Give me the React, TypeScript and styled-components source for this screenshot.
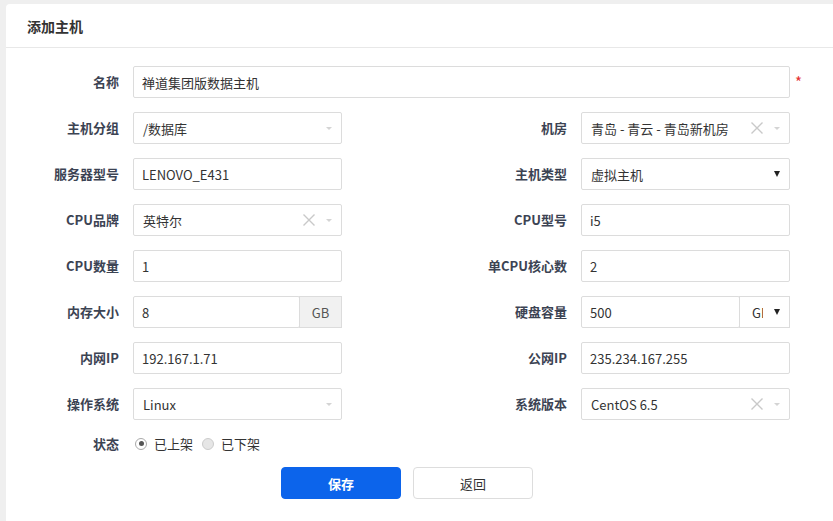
import React from 'react'
import styled, { createGlobalStyle } from 'styled-components'

const GlobalStyle = createGlobalStyle`
  body {
    margin: 0;
    background: #efefef;
    font-family: "Noto Sans CJK SC", "Noto Sans", sans-serif;
  }
  * { box-sizing: border-box; }
`

const Card = styled.div`
  margin: 4px 0 0 6px;
  height: 517px;
  background: #fff;
  border-radius: 4px 0 0 0;
`

const Header = styled.div`
  height: 44px;
  display: flex;
  align-items: center;
  padding-left: 21px;
  border-bottom: 1px solid #e8e8e8;
`

const Title = styled.h2`
  margin: 0;
  font-size: 14px;
  font-weight: 700;
  color: #333;
`

const Form = styled.div`
  display: grid;
  grid-template-columns: 100px 209px 1fr 100px 209px;
  column-gap: 14px;
  row-gap: 14px;
  padding: 18px 43px 0 13px;
`

const Label = styled.div<{ $short?: boolean }>`
  line-height: ${p => p.$short ? '19px' : '32px'};
  text-align: right;
  font-size: 13px;
  font-weight: 700;
  color: #3c4353;
  white-space: nowrap;
`

const RightLabel = styled(Label)`
  grid-column: 4;
`

const Cell = styled.div<{ $span?: number }>`
  grid-column: auto / span ${p => p.$span || 1};
  position: relative;
  display: flex;
`

const Input = styled.input`
  flex: 1;
  min-width: 0;
  height: 32px;
  padding: 0 8px;
  border: 1px solid #dcdcdc;
  border-radius: 2px;
  font-family: inherit;
  font-size: 13px;
  color: #333;
  background: #fff;
  outline: none;
`

const Required = styled.span`
  position: absolute;
  left: calc(100% + 5px);
  top: 5px;
  color: #e53333;
  font-size: 15px;
`

const Addon = styled.div`
  width: 43px;
  height: 32px;
  margin-left: -1px;
  display: flex;
  align-items: center;
  justify-content: center;
  background: #f1f1f1;
  border: 1px solid #dcdcdc;
  font-size: 13px;
  color: #555;
`

const UnitSelect = styled.div`
  width: 51px;
  height: 32px;
  margin-left: -1px;
  display: flex;
  align-items: center;
  padding: 0 9px 0 12px;
  border: 1px solid #dcdcdc;
  font-size: 13px;
  color: #333;
`

const Clipped = styled.span`
  width: 11px;
  overflow: hidden;
  white-space: nowrap;
`

const SelectBox = styled.div`
  flex: 1;
  height: 32px;
  display: flex;
  align-items: center;
  padding: 0 9px;
  border: 1px solid #dcdcdc;
  border-radius: 2px;
  font-size: 13px;
  color: #333;
  background: #fff;
`

const Value = styled.span`
  flex: 1;
  white-space: nowrap;
`

const Caret = styled.span`
  width: 0;
  height: 0;
  margin-left: 10px;
  border-left: 3.5px solid transparent;
  border-right: 3.5px solid transparent;
  border-top: 3px solid #d4d4d4;
`

const BlackCaret = styled.span`
  width: 0;
  height: 0;
  margin-left: auto;
  border-left: 3px solid transparent;
  border-right: 3px solid transparent;
  border-top: 6px solid #222;
`

const RadioGroup = styled.div`
  grid-column: 2 / span 4;
  display: flex;
  align-items: center;
  height: 19px;
  padding-left: 2px;
  font-size: 13px;
  color: #333;
`

const RadioItem = styled.label`
  display: flex;
  align-items: center;
  gap: 7px;
  margin-right: 9px;
`

const RadioDot = styled.span<{ $checked?: boolean }>`
  width: 12px;
  height: 12px;
  border-radius: 50%;
  border: 1px solid ${p => p.$checked ? '#aaa' : '#ccc'};
  background: ${p => p.$checked ? '#fff' : '#e6e6e6'};
  display: flex;
  align-items: center;
  justify-content: center;
  &::after {
    content: '';
    width: 5px;
    height: 5px;
    border-radius: 50%;
    background: ${p => p.$checked ? '#555' : 'transparent'};
  }
`

const Actions = styled.div`
  grid-column: 1 / -1;
  display: flex;
  justify-content: center;
  gap: 12px;
  padding-left: 5px;
`

const Button = styled.button<{ $primary?: boolean }>`
  width: 120px;
  height: 32px;
  border-radius: 4px;
  border: 1px solid ${p => p.$primary ? '#0c64eb' : '#ddd'};
  background: ${p => p.$primary ? '#0c64eb' : '#fff'};
  color: ${p => p.$primary ? '#fff' : '#333'};
  font-family: inherit;
  font-size: 13px;
  font-weight: ${p => p.$primary ? 700 : 400};
`

const ClearIcon = () => (
  <svg width="14" height="14" viewBox="0 0 14 14">
    <path d="M1.5 1.5L12.5 12.5M12.5 1.5L1.5 12.5" stroke="#c9c9c9" strokeWidth="1.4" />
  </svg>
)

type SelectProps = { value: string, clearable?: boolean }

const Chosen = ({ value, clearable }: SelectProps) => (
  <SelectBox>
    <Value>{value}</Value>
    {clearable && <ClearIcon />}
    <Caret />
  </SelectBox>
)

const App = () => {
  return (
    <>
      <GlobalStyle />
      <Card>
        <Header>
          <Title>添加主机</Title>
        </Header>
        <Form>
          <Label>名称</Label>
          <Cell $span={4}>
            <Input defaultValue="禅道集团版数据主机" />
            <Required>*</Required>
          </Cell>

          <Label>主机分组</Label>
          <Cell><Chosen value="/数据库" /></Cell>
          <RightLabel>机房</RightLabel>
          <Cell><Chosen value="青岛 - 青云 - 青岛新机房" clearable /></Cell>

          <Label>服务器型号</Label>
          <Cell><Input defaultValue="LENOVO_E431" /></Cell>
          <RightLabel>主机类型</RightLabel>
          <Cell>
            <SelectBox>
              <Value>虚拟主机</Value>
              <BlackCaret />
            </SelectBox>
          </Cell>

          <Label>CPU品牌</Label>
          <Cell><Chosen value="英特尔" clearable /></Cell>
          <RightLabel>CPU型号</RightLabel>
          <Cell><Input defaultValue="i5" /></Cell>

          <Label>CPU数量</Label>
          <Cell><Input defaultValue="1" /></Cell>
          <RightLabel>单CPU核心数</RightLabel>
          <Cell><Input defaultValue="2" /></Cell>

          <Label>内存大小</Label>
          <Cell>
            <Input defaultValue="8" />
            <Addon>GB</Addon>
          </Cell>
          <RightLabel>硬盘容量</RightLabel>
          <Cell>
            <Input defaultValue="500" />
            <UnitSelect>
              <Clipped>GB</Clipped>
              <BlackCaret />
            </UnitSelect>
          </Cell>

          <Label>内网IP</Label>
          <Cell><Input defaultValue="192.167.1.71" /></Cell>
          <RightLabel>公网IP</RightLabel>
          <Cell><Input defaultValue="235.234.167.255" /></Cell>

          <Label>操作系统</Label>
          <Cell><Chosen value="Linux" /></Cell>
          <RightLabel>系统版本</RightLabel>
          <Cell><Chosen value="CentOS 6.5" clearable /></Cell>

          <Label $short>状态</Label>
          <RadioGroup>
            <RadioItem><RadioDot $checked />已上架</RadioItem>
            <RadioItem><RadioDot />已下架</RadioItem>
          </RadioGroup>

          <Actions>
            <Button $primary>保存</Button>
            <Button>返回</Button>
          </Actions>
        </Form>
      </Card>
    </>
  )
}

export default App
